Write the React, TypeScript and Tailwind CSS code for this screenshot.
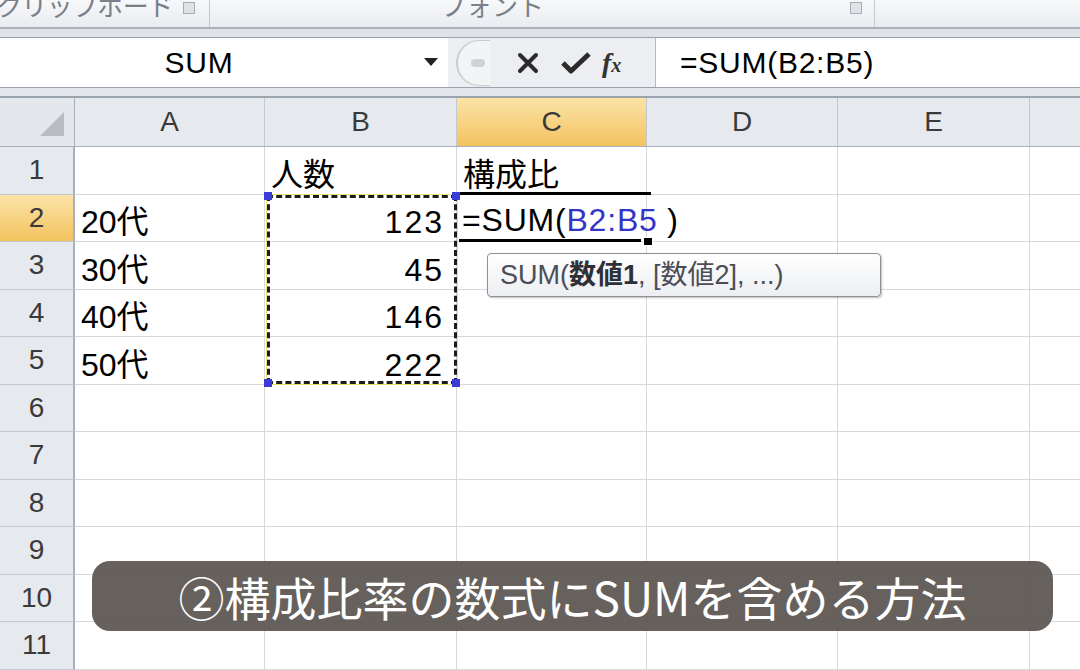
import React from 'react';

const COLS = [
  { key: 'A', w: 190 },
  { key: 'B', w: 192 },
  { key: 'C', w: 190 },
  { key: 'D', w: 191 },
  { key: 'E', w: 192 },
  { key: 'F', w: 192 },
];

const ROWS: Record<number, Record<string, React.ReactNode>> = {
  1: { B: '人数', C: '構成比' },
  2: { A: '20代', B: '123' },
  3: { A: '30代', B: '45' },
  4: { A: '40代', B: '146' },
  5: { A: '50代', B: '222' },
};

const FONT = { fontFamily: '"Liberation Sans", "Noto Sans CJK JP", sans-serif' };

function Ribbon() {
  return (
    <div className="h-[27px] flex bg-gradient-to-b from-[#f7f8fa] to-[#e9ecf0] overflow-hidden text-[#7a7f88] text-[26px] leading-none">
      <div className="w-[210px] relative border-r border-[#c5cad2] flex">
        <span className="-mt-[6px] ml-[-4px] tracking-tight">クリップボード</span>
        <span className="absolute right-[14px] top-[2px] w-[12px] h-[12px] border border-[#a8adb5] bg-[#dfe2e6]" />
      </div>
      <div className="w-[665px] relative border-r border-[#c5cad2] flex justify-center">
        <span className="-mt-[6px] ml-[-100px]">フォント</span>
        <span className="absolute right-[12px] top-[2px] w-[12px] h-[12px] border border-[#a8adb5] bg-[#dfe2e6]" />
      </div>
      <div className="flex-1" />
    </div>
  );
}

function FormulaBar() {
  return (
    <>
      <div className="h-[10px] bg-[#dfe3e8] border-t-2 border-[#a9b0ba]" />
      <div className="h-[51px] flex border-t border-b border-[#9aa2ad] bg-white">
        <div className="w-[448px] relative flex items-center justify-center text-[30px] text-black">
          <span className="ml-[-50px] tracking-wide">SUM</span>
          <span className="absolute right-[10px] top-[20px] w-0 h-0 border-l-[7px] border-r-[7px] border-t-[8px] border-l-transparent border-r-transparent border-t-[#222]" />
        </div>
        <div className="w-[208px] bg-[#eceef1] flex items-center relative border-r border-[#b4bac3]">
          <div className="ml-[8px] w-[34px] h-[46px] rounded-l-full border-l-2 border-t border-b border-[#c9cdd3] bg-[#f3f4f6] flex items-center justify-center">
            <span className="w-[14px] h-[8px] rounded-full bg-[#cfd2d6] ml-[8px]" />
          </div>
          <svg className="ml-[26px]" width="24" height="24" viewBox="0 0 24 24">
            <path d="M4 4 L20 20 M20 4 L4 20" stroke="#2b2b2b" strokeWidth="4" strokeLinecap="round" />
          </svg>
          <svg className="ml-[20px]" width="32" height="26" viewBox="0 0 32 26">
            <path d="M3 13 L11 21 L29 4" stroke="#2b2b2b" strokeWidth="5" fill="none" strokeLinejoin="round" />
          </svg>
          <span className="ml-[10px] text-[28px] italic font-bold text-[#333]" style={{ fontFamily: '"Liberation Serif", serif' }}>
            f<span className="text-[20px]">x</span>
          </span>
        </div>
        <div className="flex-1 flex items-center pl-[24px] text-[30px] text-black tracking-wide">
          =SUM(B2:B5)
        </div>
      </div>
      <div className="h-[10px] bg-[#e3e7ec] border-b-2 border-[#9ba3ad]" />
    </>
  );
}

function Grid() {
  const rowNums = Array.from({ length: 11 }, (_, i) => i + 1);
  return (
    <div className="relative">
      {/* column headers */}
      <div className="flex h-[49px] border-b border-[#a8b0ba]">
        <div className="w-[75px] shrink-0 bg-[#e4e7ec] border-r border-[#a8b0ba] relative">
          <span className="absolute right-[10px] bottom-[10px] w-0 h-0" style={{ borderBottom: '24px solid #b9bdc3', borderLeft: '24px solid transparent' }} />
        </div>
        {COLS.map((c) => (
          <div
            key={c.key}
            style={{ width: c.w }}
            className={`shrink-0 flex items-center justify-center text-[28px] border-r border-[#c3c9d1] ${
              c.key === 'C'
                ? 'bg-gradient-to-b from-[#fbe3a6] to-[#f3c35e] text-[#3a3a3a]'
                : 'bg-[#e6e9ee] text-[#3a3a3a]'
            }`}
          >
            {c.key === 'F' ? '' : c.key}
          </div>
        ))}
      </div>
      {rowNums.map((r) => (
        <div key={r} className="flex h-[47.5px]">
          <div
            className={`w-[75px] shrink-0 flex items-center justify-center text-[28px] border-r-2 border-b border-r-[#a8b0ba] border-b-[#c3c9d1] ${
              r === 2 ? 'bg-gradient-to-b from-[#fbe3a6] to-[#f3c35e] text-[#3a3a3a]' : 'bg-[#e6e9ee] text-[#3a3a3a]'
            }`}
          >
            {r}
          </div>
          {COLS.map((c) => {
            const v = ROWS[r]?.[c.key];
            const right = c.key === 'B' && r > 1;
            return (
              <div
                key={c.key}
                style={{ width: c.w }}
                className={`shrink-0 flex items-end pb-[3px] text-[32px] leading-none text-black border-r border-b border-[#d8d8d8] overflow-hidden whitespace-nowrap ${
                  right ? 'justify-end pr-[12px] tracking-[2px]' : 'pl-[6px]'
                }`}
              >
                {v}
              </div>
            );
          })}
        </div>
      ))}

      {/* C2 formula being edited */}
      <div className="absolute left-[462px] top-[99px] h-[44px] flex items-end pb-[5px] text-[32px] leading-none whitespace-nowrap tracking-wide">
        <span className="text-black">=SUM(</span>
        <span className="text-[#3434c8]">B2:B5</span>
        <span className="text-black">&nbsp;)</span>
      </div>

      {/* active cell border lines */}
      <div className="absolute left-[459px] top-[94px] w-[192px] h-[3px] bg-black" />
      <div className="absolute left-[459px] top-[141px] w-[182px] h-[3px] bg-black" />
      <div className="absolute left-[643px] top-[139px] w-[10px] h-[9px] bg-black border border-white" />

      {/* marching ants selection */}
      <div className="absolute left-[267px] top-[97px] w-[190px] h-[189px] border-[3px] border-dashed border-[#1c1c1c] outline outline-1 outline-[#e8e36a]" />
      <span className="absolute left-[264px] top-[94px] w-[8px] h-[8px] bg-[#3b3bd8]" />
      <span className="absolute left-[452px] top-[94px] w-[8px] h-[8px] bg-[#3b3bd8]" />
      <span className="absolute left-[264px] top-[281px] w-[8px] h-[8px] bg-[#3b3bd8]" />
      <span className="absolute left-[452px] top-[281px] w-[8px] h-[8px] bg-[#3b3bd8]" />

      {/* function tooltip */}
      <div className="absolute left-[487px] top-[155px] w-[394px] h-[44px] rounded-[4px] border border-[#8d9096] bg-gradient-to-b from-white to-[#eceef1] shadow-[1px_1px_2px_rgba(0,0,0,0.25)] flex items-center pl-[12px] text-[27px] text-[#4a4d55] whitespace-nowrap">
        <span>SUM(</span>
        <span className="font-bold text-[#2e3038]">数値1</span>
        <span>, [数値2], ...)</span>
      </div>

      {/* caption */}
      <div
        className="absolute left-[92px] top-[463px] w-[961px] h-[70px] rounded-[18px] bg-[#5f5954]/95 flex items-center justify-center text-white text-[46px] leading-none"
        style={{ fontFamily: '"Noto Sans CJK JP", sans-serif' }}
      >
        ②構成比率の数式にSUMを含める方法
      </div>
    </div>
  );
}

export default function App() {
  return (
    <div className="w-[1080px] h-[670px] overflow-hidden bg-white" style={FONT}>
      <Ribbon />
      <FormulaBar />
      <Grid />
    </div>
  );
}
